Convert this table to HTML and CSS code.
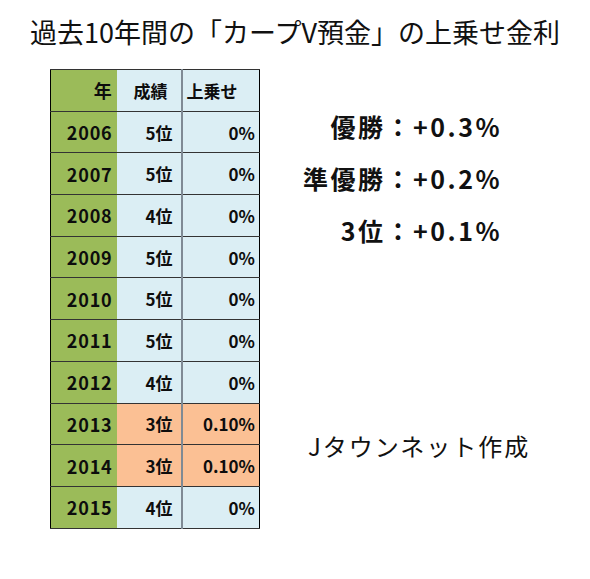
FILE: index.html
```html
<!DOCTYPE html>
<html lang="ja">
<head>
<meta charset="utf-8">
<link rel="stylesheet" href="styles.css">
</head>
<body>
<h1 class="title">過去10年間の「カープV預金」の上乗せ金利</h1>
<div class="main">
  <table class="rates">
    <tr class="head"><td class="year">年</td><td class="rank">成績</td><td class="bonus">上乗せ</td></tr>
    <tr><td class="year">2006</td><td class="rank">5位</td><td class="bonus">0%</td></tr>
    <tr><td class="year">2007</td><td class="rank">5位</td><td class="bonus">0%</td></tr>
    <tr><td class="year">2008</td><td class="rank">4位</td><td class="bonus">0%</td></tr>
    <tr><td class="year">2009</td><td class="rank">5位</td><td class="bonus">0%</td></tr>
    <tr><td class="year">2010</td><td class="rank">5位</td><td class="bonus">0%</td></tr>
    <tr><td class="year">2011</td><td class="rank">5位</td><td class="bonus">0%</td></tr>
    <tr><td class="year">2012</td><td class="rank">4位</td><td class="bonus">0%</td></tr>
    <tr class="hit"><td class="year">2013</td><td class="rank">3位</td><td class="bonus">0.10%</td></tr>
    <tr class="hit"><td class="year">2014</td><td class="rank">3位</td><td class="bonus">0.10%</td></tr>
    <tr><td class="year">2015</td><td class="rank">4位</td><td class="bonus">0%</td></tr>
  </table>
  <div class="side">
    <div class="rules">
      <p class="rule">優勝：+0.3%</p>
      <p class="rule">準優勝：+0.2%</p>
      <p class="rule">3位：+0.1%</p>
    </div>
    <p class="credit">Jタウンネット作成</p>
  </div>
</div>
</body>
</html>
```
FILE: styles.css
```css
html, body {
  margin: 0;
  padding: 0;
  background: #ffffff;
}
body {
  width: 590px;
  height: 579px;
  overflow: hidden;
  font-family: "Noto Sans CJK JP", "Noto Sans", sans-serif;
  color: #111;
}
.title {
  margin: 0;
  padding-top: 14px;
  font-size: 27px;
  font-weight: 400;
  line-height: 36px;
  text-align: center;
  color: #111;
}
.main {
  display: flex;
  padding-left: 50px;
  margin-top: 19px;
}
.rates {
  border-collapse: collapse;
  border: 1.5px solid #000;
  font-weight: 700;
  font-size: 17px;
  flex: none;
}
.rates td {
  height: 41.7px;
  padding: 0 4px;
  border-top: 1px solid #333;
  border-bottom: 1px solid #333;
  text-align: right;
  background: #dbeef4;
  line-height: 1;
  box-sizing: border-box;
  color: #0d0d0d;
}
.rates td.year {
  width: 66px;
  background: #9bbb59;
  font-size: 18px;
  letter-spacing: 0.8px;
}
.rates td.rank {
  width: 65px;
  padding-right: 8px;
  border-right: 2px solid #7f8a94;
}
.rates td.bonus {
  width: 78px;
}
.rates tr.head td.rank {
  text-align: center;
  padding-right: 0;
  padding-left: 4px;
}
.rates tr.head td.bonus {
  text-align: left;
}
.rates tr.hit td.rank,
.rates tr.hit td.bonus {
  background: #fbc094;
}
.side {
  display: flex;
  flex-direction: column;
  flex: 1;
  min-width: 0;
  padding-top: 41px;
  white-space: nowrap;
}
.rules {
  display: flex;
  flex-direction: column;
  align-items: flex-end;
  gap: 20px;
  margin-right: 88px;
}
.rule {
  margin: 0;
  font-size: 25px;
  font-weight: 700;
  line-height: 32px;
  letter-spacing: 2.5px;
}
.credit {
  margin: 184px 0 0 48px;
  font-size: 24px;
  font-weight: 400;
  line-height: 32px;
  letter-spacing: 2px;
}
```
